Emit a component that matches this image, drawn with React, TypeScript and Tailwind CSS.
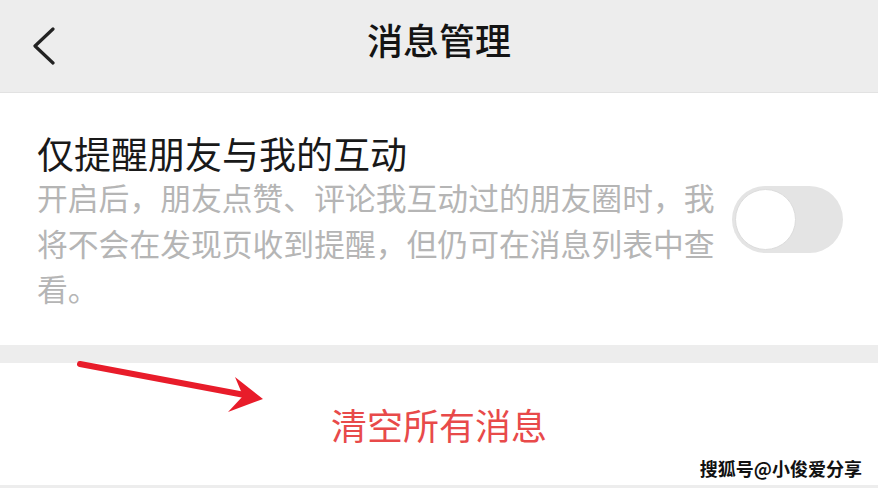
import React from "react";

export default function App() {
  const font = {
    fontFamily: '"Noto Sans CJK SC", "Noto Sans", "Liberation Sans", sans-serif',
  };
  return (
    <div
      className="relative w-[878px] h-[488px] overflow-hidden bg-white flex flex-col"
      style={font}
    >
      {/* Header */}
      <div className="h-[93px] shrink-0 bg-[#ededed] border-b border-[#e2e2e2] grid grid-cols-[1fr_auto_1fr] items-center">
        <div className="pl-[32px] flex items-center">
          <svg width="24" height="38" viewBox="0 0 24 38" fill="none">
            <path
              d="M21 2 L3 19 L21 36"
              stroke="#222"
              strokeWidth="3.2"
              strokeLinecap="round"
              strokeLinejoin="round"
            />
          </svg>
        </div>
        <div className="text-[36px] leading-[44px] font-medium text-[#141414] -mt-[14px]">
          消息管理
        </div>
        <div />
      </div>

      {/* Setting row */}
      <div className="h-[252px] shrink-0 flex items-center justify-between pl-[37px] pr-[35px]">
        <div className="self-start pt-[40px]">
          <div className="text-[37px] leading-[41px] text-[#191919]">
            仅提醒朋友与我的互动
          </div>
          <div className="text-[30.8px] leading-[45.5px] text-[#b5b5b5] whitespace-nowrap">
            <div>开启后，朋友点赞、评论我互动过的朋友圈时，我</div>
            <div>将不会在发现页收到提醒，但仍可在消息列表中查</div>
            <div>看。</div>
          </div>
        </div>
        <div className="w-[111px] h-[67px] rounded-full bg-[#e4e4e4] p-[3px] flex items-center">
          <div className="w-[61px] h-[61px] rounded-full bg-white border border-[#dcdcdc]" />
        </div>
      </div>

      {/* Gray gap */}
      <div className="h-[18px] shrink-0 bg-[#ededed]" />

      {/* Clear button */}
      <div className="h-[122px] shrink-0 flex items-center justify-center">
        <div className="text-[36px] leading-[44px] text-[#e84a4a]">清空所有消息</div>
      </div>

      <div className="flex-1 bg-[#ededed]" />

      {/* Red arrow annotation */}
      <svg
        className="absolute left-0 top-0 pointer-events-none"
        width="878"
        height="488"
        viewBox="0 0 878 488"
      >
        <line
          x1="80"
          y1="364"
          x2="250"
          y2="396"
          stroke="#e81c2a"
          strokeWidth="6"
          strokeLinecap="round"
        />
        <polygon points="263,399 235,377 243,396 228,412" fill="#e81c2a" />
      </svg>

      {/* Watermark */}
      <div className="absolute right-[16px] bottom-[9px] text-[18px] leading-[22px] font-bold text-[#111] [text-shadow:0_0_2px_#fff,0_0_2px_#fff]">
        搜狐号@小俊爱分享
      </div>
    </div>
  );
}
